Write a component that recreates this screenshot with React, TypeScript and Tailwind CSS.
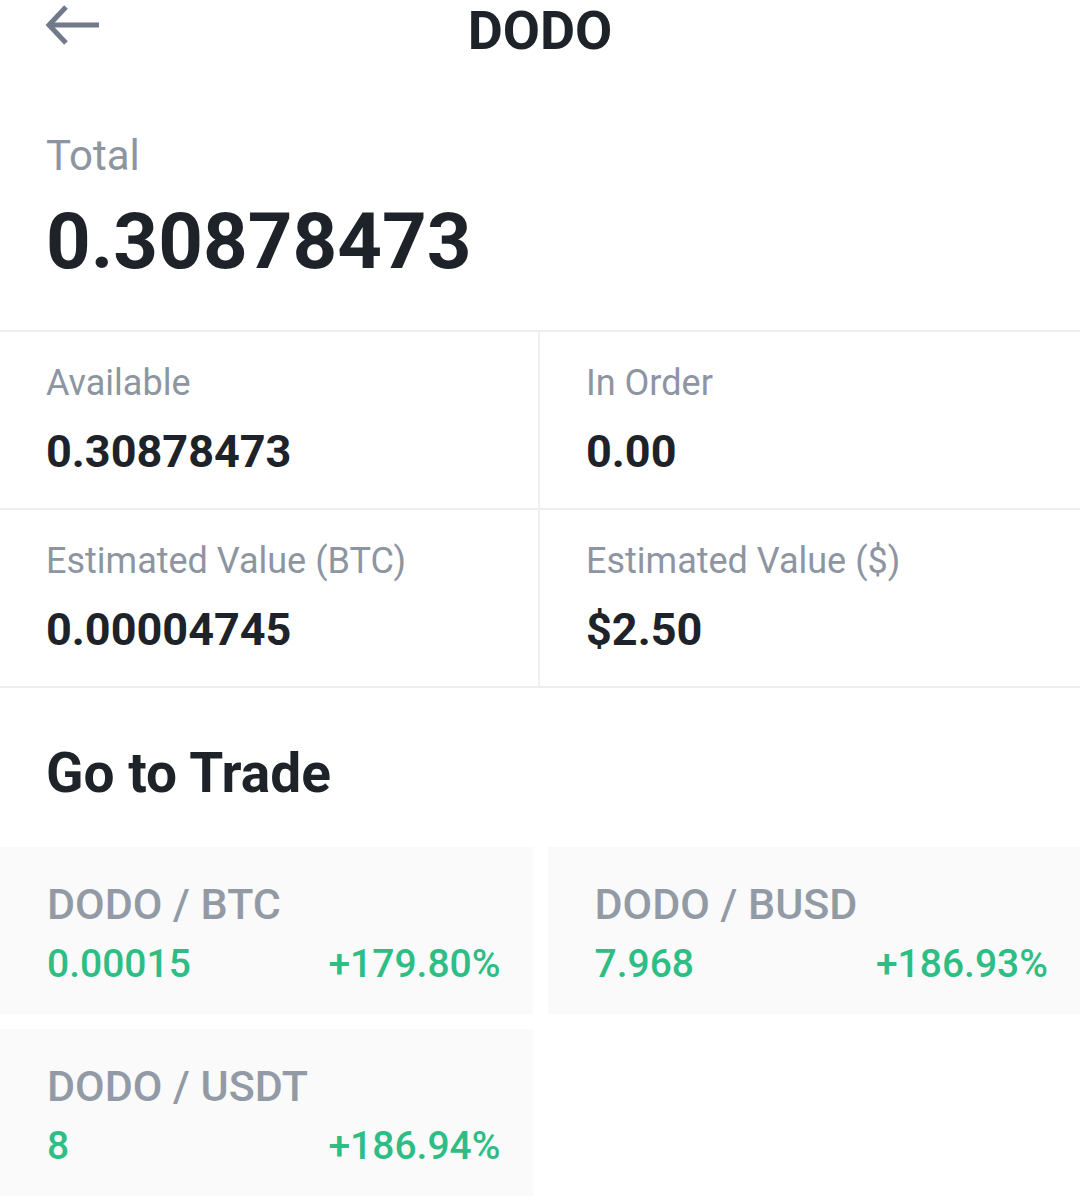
import React from 'react'

const font = {fontFamily: 'Roboto, "Liberation Sans", sans-serif'}

const stats = [
    [
        {label: 'Available', value: '0.30878473'},
        {label: 'In Order', value: '0.00'},
    ],
    [
        {label: 'Estimated Value (BTC)', value: '0.00004745'},
        {label: 'Estimated Value ($)', value: '$2.50'},
    ],
]

const pairs = [
    {pair: 'DODO / BTC', price: '0.00015', change: '+179.80%'},
    {pair: 'DODO / BUSD', price: '7.968', change: '+186.93%'},
    {pair: 'DODO / USDT', price: '8', change: '+186.94%'},
]

const BackArrow = () => (
    <svg width="58" height="44" viewBox="0 0 58 44" fill="none">
        <path d="M55 21H7M22 3L5 21l17 18" stroke="#707a8a" strokeWidth="5" />
    </svg>
)

export default function App() {
    return (
        <div className="w-[1080px] h-[1200px] bg-white overflow-hidden" style={font}>
            {/* header */}
            <div className="relative h-16 flex items-center justify-center">
                <div className="absolute left-[44px] top-[4px]">
                    <BackArrow />
                </div>
                <h1 className="-mt-[3px] text-[54px] leading-[64px] font-bold text-[#1e2329]">DODO</h1>
            </div>

            {/* total */}
            <div className="px-[46px] pt-[68px] pb-[40px] border-b-2 border-[#eeeeee]">
                <div className="text-[42px] leading-[48px] text-[#8d95a1]">Total</div>
                <div className="mt-[14px] text-[78px] leading-[96px] font-bold text-[#1e2329]">0.30878473</div>
            </div>

            {/* stats grid */}
            {stats.map((row, i) => (
                <div key={i} className="grid grid-cols-2 border-b-2 border-[#eeeeee]">
                    {row.map((s, j) => (
                        <div
                            key={s.label}
                            className={
                                j === 0
                                    ? 'pl-[46px] pt-[29px] pb-[28px] border-r-2 border-[#f0f0f0]'
                                    : 'pl-[46px] pt-[29px] pb-[28px]'
                            }
                        >
                            <div className="text-[36px] leading-[44px] text-[#8d95a1]">{s.label}</div>
                            <div className="mt-[19px] text-[45px] leading-[56px] font-bold text-[#1e2329]">
                                {s.value}
                            </div>
                        </div>
                    ))}
                </div>
            ))}

            {/* go to trade */}
            <h2 className="mt-[52px] px-[46px] text-[55px] leading-[66px] font-bold text-[#1e2329]">Go to Trade</h2>

            <div className="mt-[41px] grid grid-cols-2 gap-[15px]">
                {pairs.map((p) => (
                    <div key={p.pair} className="h-[167px] bg-[#fafafa] pl-[47px] pr-[32px] pt-[32px]">
                        <div className="text-[43px] leading-[50px] font-medium text-[#929aa5]">{p.pair}</div>
                        <div className="mt-[10px] flex justify-between text-[39px] leading-[50px] font-medium text-[#2ebd85]">
                            <span>{p.price}</span>
                            <span>{p.change}</span>
                        </div>
                    </div>
                ))}
            </div>
        </div>
    )
}
